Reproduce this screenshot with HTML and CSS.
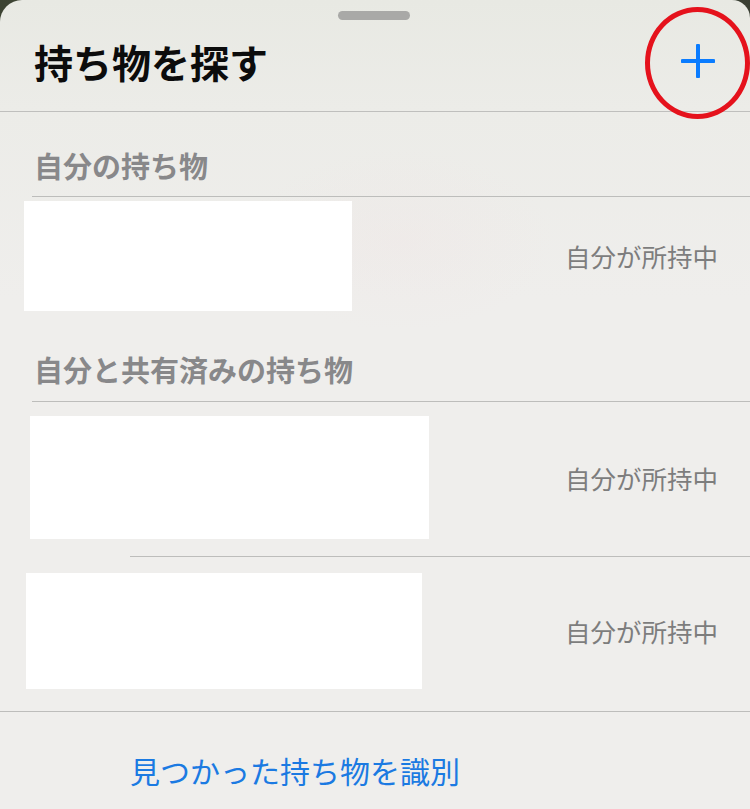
FILE: index.html
```html
<!DOCTYPE html>
<html lang="ja">
<head>
<meta charset="utf-8">
<title>持ち物を探す</title>
<link rel="stylesheet" href="styles.css">
</head>
<body>
<div class="sheet">
  <div class="grabber"></div>
  <header class="topbar">
    <h1 class="title">持ち物を探す</h1>
    <button class="add" aria-label="追加">
      <svg width="34" height="34" viewBox="0 0 34 34"><path d="M17 1.5V32.5M1.5 17H32.5" stroke="#0a7cff" stroke-width="4" stroke-linecap="round" fill="none"/></svg>
    </button>
    <span class="mark"></span>
  </header>

  <h2 class="section-head section-head--first">自分の持ち物</h2>
  <div class="row row--a">
    <div class="thumb thumb--a"></div>
    <span class="status">自分が所持中</span>
  </div>

  <h2 class="section-head section-head--second">自分と共有済みの持ち物</h2>
  <div class="row row--b">
    <div class="thumb thumb--b"></div>
    <span class="status">自分が所持中</span>
  </div>
  <div class="divider divider--inset"></div>
  <div class="row row--c">
    <div class="thumb thumb--c"></div>
    <span class="status">自分が所持中</span>
  </div>
  <div class="divider"></div>

  <footer class="footer">
    <a class="link" href="#">見つかった持ち物を識別</a>
  </footer>
</div>
</body>
</html>
```

FILE: styles.css
```css
html, body {
  margin: 0;
  padding: 0;
}
body {
  width: 750px;
  height: 809px;
  overflow: hidden;
  background: linear-gradient(90deg, #3c4332 0%, #5b6150 50%, #3a3f33 100%);
  font-family: "Noto Sans CJK JP", "Noto Sans", sans-serif;
}
.sheet {
  height: 809px;
  border-radius: 22px 18px 0 0;
  background:
    radial-gradient(ellipse 220px 130px at 400px 240px, rgba(240, 228, 228, 0.3), rgba(240, 228, 228, 0) 70%),
    linear-gradient(180deg, #e8e9e3 0px, #ecece8 110px, #efeeec 300px, #efeeec 100%);
  display: flex;
  flex-direction: column;
  padding-top: 11px;
  box-sizing: border-box;
}
.grabber {
  align-self: center;
  width: 72px;
  height: 9px;
  border-radius: 5px;
  background: #a9a9a7;
  transform: translateX(-1px);
}
.topbar {
  position: relative;
  height: 92px;
  box-sizing: border-box;
  padding: 0 34px 10px 34px;
  display: flex;
  align-items: center;
  justify-content: space-between;
  border-bottom: 1px solid #bfbfbd;
}
.title {
  margin: 0;
  font-size: 39px;
  line-height: 40px;
  font-weight: 700;
  color: #0c0c0c;
}
.add {
  border: 0;
  padding: 0;
  background: none;
  width: 34px;
  height: 34px;
  display: flex;
  margin-right: 1px;
}
.mark {
  position: absolute;
  left: 645px;
  top: -13px;
  width: 95px;
  height: 102px;
  border: 5px solid #e5121c;
  border-radius: 50%;
}
.section-head {
  margin: 0 0 0 32px;
  padding: 0 0 16px 2px;
  height: 85px;
  box-sizing: border-box;
  display: flex;
  align-items: flex-end;
  font-size: 29px;
  line-height: 29px;
  font-weight: 700;
  color: #88888a;
  border-bottom: 1px solid #bdbdbb;
}
.section-head--second {
  height: 91px;
  padding-bottom: 17px;
}
.row {
  display: flex;
  align-items: center;
  justify-content: space-between;
  padding-right: 32px;
}
.row--a { padding-top: 4px; padding-bottom: 0; }
.row--b { padding-top: 14px; padding-bottom: 17px; }
.row--c { padding-top: 16px; padding-bottom: 22px; }
.thumb {
  background: #ffffff;
}
.thumb--a { margin-left: 24px; width: 328px; height: 110px; }
.thumb--b { margin-left: 30px; width: 399px; height: 123px; }
.thumb--c { margin-left: 26px; width: 396px; height: 116px; }
.status {
  font-size: 25.5px;
  line-height: 30px;
  color: #7d7d7d;
  font-weight: 400;
}
.divider {
  height: 1px;
  background: #bdbdbb;
}
.divider--inset {
  margin-left: 130px;
}
.footer {
  flex: 1;
  display: flex;
  align-items: center;
  padding-left: 130px;
  padding-top: 19px;
}
.link {
  font-size: 30px;
  line-height: 32px;
  color: #1b7ae2;
  text-decoration: none;
}
```
